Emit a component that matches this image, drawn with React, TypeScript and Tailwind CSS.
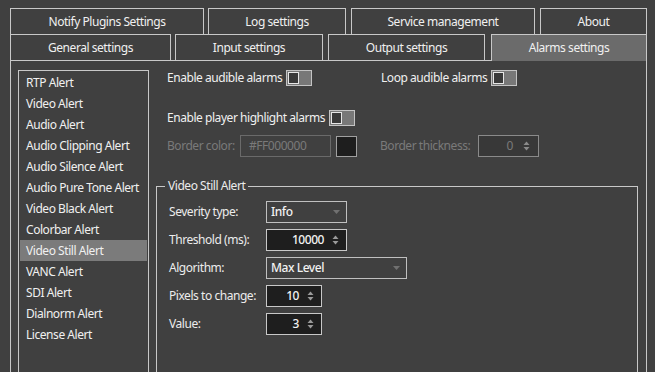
import React from "react";

const topTabs = [
  { label: "Notify Plugins Settings", w: "w-[194px]", ml: "" },
  { label: "Log settings", w: "w-[138px]", ml: "ml-[4px]" },
  { label: "Service management", w: "w-[184px]", ml: "ml-[5px]" },
  { label: "About", w: "w-[107px]", ml: "ml-[5px]" },
];

const alerts = [
  "RTP Alert",
  "Video Alert",
  "Audio Alert",
  "Audio Clipping Alert",
  "Audio Silence Alert",
  "Audio Pure Tone Alert",
  "Video Black Alert",
  "Colorbar Alert",
  "Video Still Alert",
  "VANC Alert",
  "SDI Alert",
  "Dialnorm Alert",
  "License Alert",
];

function Toggle() {
  return (
    <div className="w-[26px] h-[16px] border border-[#c4c4c4] bg-[#787878] p-[1px] flex shrink-0">
      <div className="w-[11px] h-full border border-[#e6e6e6] bg-[#3a3a3a]" />
    </div>
  );
}

function SpinArrows({ dim }: { dim?: boolean }) {
  const c = dim ? "#8a8a8a" : "#9a9a9a";
  return (
    <svg width="7" height="12" viewBox="0 0 7 12" className="shrink-0">
      <path d="M0.5 5 L3.5 1.5 L6.5 5 Z" fill={c} />
      <path d="M0.5 7 L3.5 10.5 L6.5 7 Z" fill={c} />
    </svg>
  );
}

function Spin({ value, w }: { value: string; w: string }) {
  return (
    <div
      className={`${w} h-[22px] border border-[#c8c8c8] bg-[#1e1e1e] flex items-center justify-end pr-[7px] gap-[8px]`}
    >
      <span className="font-medium text-[#f2f2f2]">{value}</span>
      <SpinArrows />
    </div>
  );
}

function Combo({ value, w }: { value: string; w: string }) {
  return (
    <div
      className={`${w} h-[22px] border border-[#c0c0c0] bg-[#404040] flex items-center justify-between pl-[4px] pr-[6px]`}
    >
      <span className="font-medium text-[#f2f2f2]">{value}</span>
      <svg width="7" height="4" viewBox="0 0 7 4">
        <path d="M0 0 L7 0 L3.5 4 Z" fill="#707070" />
      </svg>
    </div>
  );
}

function Row({ label, children }: { label: string; children: React.ReactNode }) {
  return (
    <div className="flex items-center h-[22px]">
      <span className="w-[97px] text-[#ececec]">{label}</span>
      {children}
    </div>
  );
}

export default function App() {
  return (
    <div
      className="w-[655px] h-[372px] bg-[#404040] overflow-hidden text-[12px] tracking-[-0.45px] text-[#f0f0f0] leading-none whitespace-nowrap"
      style={{ fontFamily: '"Noto Sans", sans-serif' }}
    >
      {/* Tabs */}
      <div className="pt-[8px] pl-[10px]">
        <div className="flex h-[26px]">
          {topTabs.map((t) => (
            <div
              key={t.label}
              className={`${t.w} ${t.ml} h-[26px] border-t border-l border-r border-[#c8c8c8] flex items-center justify-center`}
            >
              {t.label}
            </div>
          ))}
        </div>
        <div className="flex h-[26px]">
          <div className="w-[161px] h-[26px] border-t border-l border-r border-[#c8c8c8] flex items-center justify-center">
            General settings
          </div>
          <div className="ml-[4px] w-[148px] h-[26px] border-t border-l border-r border-[#c8c8c8] flex items-center justify-center">
            Input settings
          </div>
          <div className="ml-[5px] w-[157px] h-[26px] border-t border-l border-r border-[#c8c8c8] flex items-center justify-center">
            Output settings
          </div>
          <div className="relative z-10 ml-[6px] w-[156px] h-[27px] border-t border-l border-r border-[#c8c8c8] bg-[#6b6b6b] flex items-center justify-center pb-px">
            Alarms settings
          </div>
        </div>

        {/* Pane */}
        <div className="w-[637px] h-[400px] border-t border-l border-r border-[#c8c8c8] pt-[9px] pl-[7px] flex">
          {/* Alert list */}
          <div className="w-[131px] h-[340px] border border-[#c8c8c8] p-px">
            {alerts.map((a) => (
              <div
                key={a}
                className={`h-[21px] flex items-center pl-[6px] ${
                  a === "Video Still Alert" ? "bg-[#7b7b7b]" : ""
                }`}
              >
                {a}
              </div>
            ))}
          </div>

          {/* Settings */}
          <div className="ml-[7px] w-[482px] flex flex-col">
            <div className="flex items-center h-[16px] pl-[11px]">
              <div className="w-[214px] flex items-center gap-[4px]">
                <span>Enable audible alarms</span>
                <Toggle />
              </div>
              <div className="flex items-center gap-[4px]">
                <span>Loop audible alarms</span>
                <Toggle />
              </div>
            </div>

            <div className="mt-[24px] flex items-center h-[16px] pl-[11px] gap-[4px]">
              <span>Enable player highlight alarms</span>
              <Toggle />
            </div>

            <div className="mt-[9px] flex items-center h-[22px] pl-[11px] text-[#7a7a7a]">
              <span className="w-[73px]">Border color:</span>
              <div className="w-[91px] h-[22px] border border-[#6a6a6a] flex items-center pl-[8px]">
                #FF000000
              </div>
              <div className="ml-[5px] w-[21px] h-[21px] border border-[#a0a0a0] bg-[#1e1e1e]" />
              <span className="ml-[23px] w-[98px]">Border thickness:</span>
              <div className="w-[61px] h-[22px] border border-[#8a8a8a] bg-[#383838] flex items-center justify-end pr-[8px] gap-[10px]">
                <span>0</span>
                <SpinArrows dim />
              </div>
            </div>

            {/* Group box */}
            <div className="relative mt-[29px] w-[482px] h-[200px] border-t border-l border-r border-[#c8c8c8] pl-[12px] pt-[14px]">
              <span className="absolute -top-[7px] left-[8px] bg-[#404040] px-[3px] text-[#ececec]">
                Video Still Alert
              </span>
              <div className="flex flex-col gap-[6px]">
                <Row label="Severity type:">
                  <Combo value="Info" w="w-[81px]" />
                </Row>
                <Row label="Threshold (ms):">
                  <Spin value="10000" w="w-[81px]" />
                </Row>
                <Row label="Algorithm:">
                  <Combo value="Max Level" w="w-[141px]" />
                </Row>
                <Row label="Pixels to change:">
                  <Spin value="10" w="w-[56px]" />
                </Row>
                <Row label="Value:">
                  <Spin value="3" w="w-[56px]" />
                </Row>
              </div>
            </div>
          </div>
        </div>
      </div>
    </div>
  );
}
